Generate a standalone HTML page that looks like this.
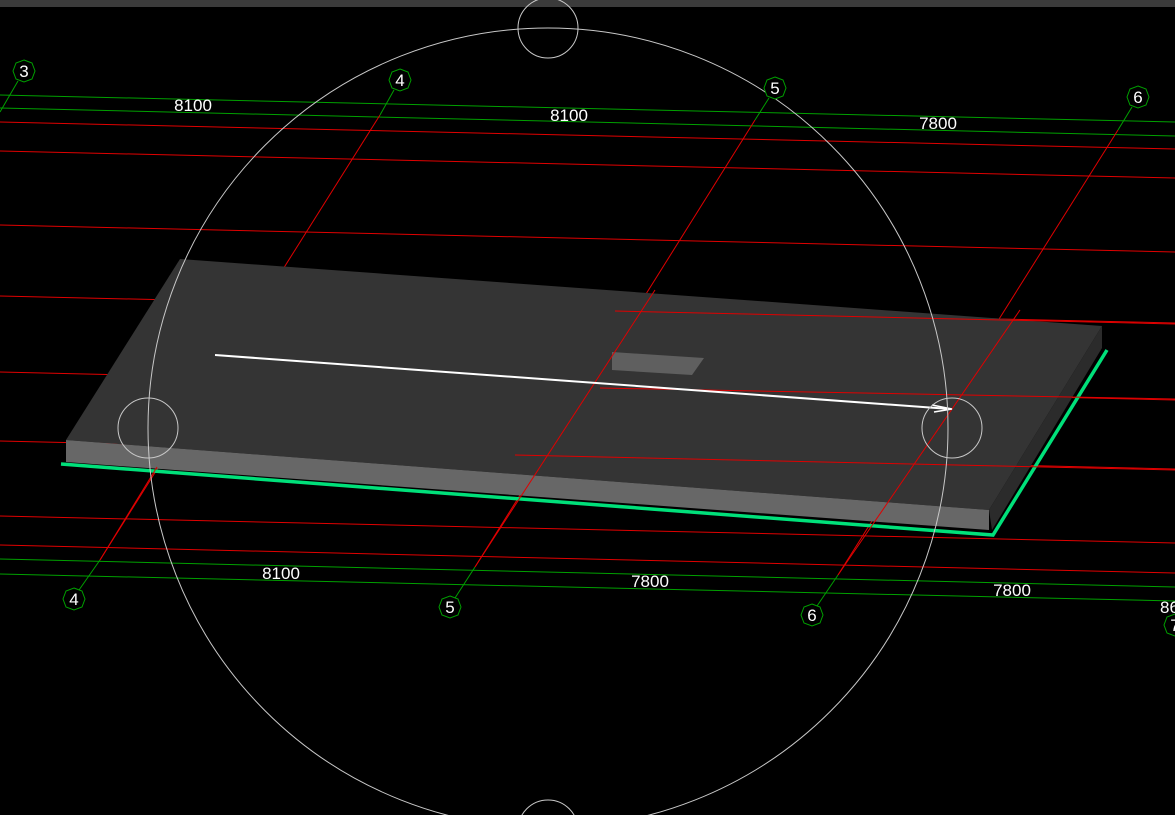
<!DOCTYPE html>
<html><head><style>
html,body{margin:0;padding:0;background:#000;width:1175px;height:815px;overflow:hidden}
svg{display:block}
text{font-family:"Liberation Sans","DejaVu Sans",sans-serif;fill:#fff;font-size:17px}
</style></head><body>
<svg width="1175" height="815" viewBox="0 0 1175 815" overflow="hidden">
<rect x="0" y="0" width="1175" height="815" fill="#000"/>
<rect x="0" y="0" width="1175" height="7" fill="#3b3b3b"/>
<g stroke="#e00000" stroke-width="1">
<line x1="0" y1="122" x2="1175" y2="149"/>
<line x1="0" y1="151" x2="1175" y2="178"/>
<line x1="0" y1="225" x2="1175" y2="252"/>
<line x1="0" y1="296" x2="1175" y2="323"/>
<line x1="0" y1="372" x2="1175" y2="400"/>
<line x1="0" y1="441" x2="1175" y2="469"/>
<line x1="0" y1="516" x2="1175" y2="543"/>
<line x1="0" y1="545" x2="1175" y2="573"/>
</g>
<g stroke="#00a000" stroke-width="1">
<line x1="0" y1="95" x2="1175" y2="122"/>
<line x1="0" y1="108" x2="1175" y2="136"/>
<line x1="0" y1="559" x2="1175" y2="587"/>
<line x1="0" y1="574" x2="1175" y2="601"/>
</g>
<g stroke="#e00000" stroke-width="1">
<line x1="380" y1="115" x2="100" y2="560"/>
<line x1="755" y1="120" x2="475" y2="567"/>
<line x1="1118" y1="130" x2="838" y2="575"/>
</g>
<g stroke="#00a000" stroke-width="1">
<line x1="394" y1="90" x2="380" y2="115"/>
<line x1="100" y1="560" x2="79" y2="590"/>
<line x1="769" y1="98" x2="755" y2="120"/>
<line x1="475" y1="567" x2="455" y2="598"/>
<line x1="1132" y1="107" x2="1118" y2="130"/>
<line x1="838" y1="575" x2="817" y2="606"/>
<line x1="18" y1="81" x2="0" y2="112"/>
</g>
<polygon points="180,259 1102,326 989,510 66,440" fill="#343434"/>
<polygon points="66,440 989,510 989,530 66,462" fill="#676767"/>
<polygon points="989,510 1102,326 1102,348 992,530" fill="#2b2b2b"/>
<polyline points="61,464 993,535 1107,350" fill="none" stroke="#00e07a" stroke-width="3.5"/>
<polygon points="612,352 704,358 692,375 612,370" fill="#5f5f5f"/>
<g stroke="#e00000" stroke-width="1">
<line x1="615" y1="311" x2="1175" y2="324"/>
<line x1="600" y1="388" x2="1175" y2="399"/>
<line x1="515" y1="455" x2="1175" y2="470"/>
<line x1="157" y1="467" x2="100" y2="560"/>
<line x1="655" y1="290" x2="475" y2="567"/>
<line x1="1020" y1="310" x2="838" y2="575"/>
</g>
<line x1="215" y1="355" x2="950" y2="409" stroke="#fff" stroke-width="2"/>
<polyline points="932,405 952,409 934,412" fill="none" stroke="#fff" stroke-width="1.5"/>
<g fill="none" stroke="#c8c8c8" stroke-width="1">
<circle cx="548" cy="428" r="400"/>
<circle cx="548" cy="28" r="30"/>
<circle cx="148" cy="428" r="30"/>
<circle cx="952" cy="428" r="30"/>
<circle cx="548" cy="830" r="30"/>
</g>
<g fill="#000" stroke="#00a000" stroke-width="1">
<polygon points="24,60 32,63 35,71 32,79 24,82 16,79 13,71 16,63"/>
<polygon points="400,69 408,72 411,80 408,88 400,91 392,88 389,80 392,72"/>
<polygon points="775,77 783,80 786,88 783,96 775,99 767,96 764,88 767,80"/>
<polygon points="1138,86 1146,89 1149,97 1146,105 1138,108 1130,105 1127,97 1130,89"/>
<polygon points="74,588 82,591 85,599 82,607 74,610 66,607 63,599 66,591"/>
<polygon points="450,596 458,599 461,607 458,615 450,618 442,615 439,607 442,599"/>
<polygon points="812,604 820,607 823,615 820,623 812,626 804,623 801,615 804,607"/>
<polygon points="1175,614 1183,617 1186,625 1183,633 1175,636 1167,633 1164,625 1167,617"/>
</g>
<g text-anchor="middle">
<text x="24" y="77">3</text>
<text x="400" y="86">4</text>
<text x="775" y="94">5</text>
<text x="1138" y="103">6</text>
<text x="74" y="605">4</text>
<text x="450" y="613">5</text>
<text x="812" y="621">6</text>
<text x="1175" y="631">7</text>
<text x="193" y="111">8100</text>
<text x="569" y="121">8100</text>
<text x="938" y="129">7800</text>
<text x="281" y="579">8100</text>
<text x="650" y="587">7800</text>
<text x="1012" y="596">7800</text>
<text x="1160" y="613" text-anchor="start">86</text>
</g>
</svg>
</body></html>
